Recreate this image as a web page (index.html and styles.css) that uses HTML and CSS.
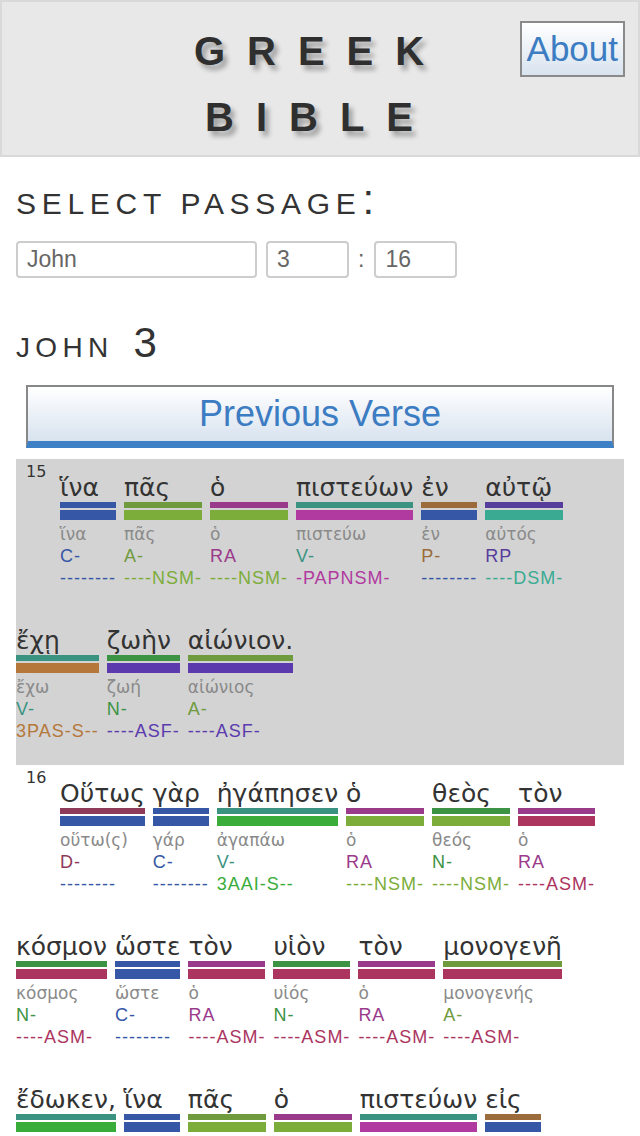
FILE: index.html
```html
<!DOCTYPE html>
<html lang="en">
<head>
<meta charset="utf-8">
<title>Greek Bible</title>
<link rel="stylesheet" href="styles.css">
</head>
<body>
<header class="site-header">
  <h1 class="title"><span class="title-line">GREEK</span><span class="title-line">BIBLE</span></h1>
  <button class="about-btn" type="button">About</button>
</header>
<main class="content">
  <h2 class="select-title">SELECT PASSAGE<span class="colon">:</span></h2>
  <form class="passage-form">
    <input class="field field-book" type="text" value="John">
    <input class="field field-num" type="text" value="3">
    <span class="sep">:</span>
    <input class="field field-num" type="text" value="16">
  </form>
  <h2 class="chapter-title">JOHN <span class="chapter-num">3</span></h2>
  <button class="prev-btn" type="button">Previous Verse</button>

  <section class="verse verse-current">
    <span class="vnum">15</span>
    <div class="word pos-C ps-none"><div class="gk">ἵνα</div><div class="bar1"></div><div class="bar2"></div><div class="lemma">ἵνα</div><div class="pos">C-</div><div class="parse">--------</div></div>
    <div class="word pos-A ps-NSM"><div class="gk">πᾶς</div><div class="bar1"></div><div class="bar2"></div><div class="lemma">πᾶς</div><div class="pos">A-</div><div class="parse">----NSM-</div></div>
    <div class="word pos-RA ps-NSM"><div class="gk">ὁ</div><div class="bar1"></div><div class="bar2"></div><div class="lemma">ὁ</div><div class="pos">RA</div><div class="parse">----NSM-</div></div>
    <div class="word pos-V ps-PAPNSM"><div class="gk">πιστεύων</div><div class="bar1"></div><div class="bar2"></div><div class="lemma">πιστεύω</div><div class="pos">V-</div><div class="parse">-PAPNSM-</div></div>
    <div class="word pos-P ps-none"><div class="gk">ἐν</div><div class="bar1"></div><div class="bar2"></div><div class="lemma">ἐν</div><div class="pos">P-</div><div class="parse">--------</div></div>
    <div class="word pos-RP ps-DSM"><div class="gk">αὐτῷ</div><div class="bar1"></div><div class="bar2"></div><div class="lemma">αὐτός</div><div class="pos">RP</div><div class="parse">----DSM-</div></div>
    <div class="word pos-V ps-3PAS"><div class="gk">ἔχῃ</div><div class="bar1"></div><div class="bar2"></div><div class="lemma">ἔχω</div><div class="pos">V-</div><div class="parse">3PAS-S--</div></div>
    <div class="word pos-N ps-ASF"><div class="gk">ζωὴν</div><div class="bar1"></div><div class="bar2"></div><div class="lemma">ζωή</div><div class="pos">N-</div><div class="parse">----ASF-</div></div>
    <div class="word pos-A ps-ASF"><div class="gk">αἰώνιον.</div><div class="bar1"></div><div class="bar2"></div><div class="lemma">αἰώνιος</div><div class="pos">A-</div><div class="parse">----ASF-</div></div>
  </section>

  <section class="verse">
    <span class="vnum">16</span>
    <div class="word pos-D ps-none"><div class="gk">Οὕτως</div><div class="bar1"></div><div class="bar2"></div><div class="lemma">οὕτω(ς)</div><div class="pos">D-</div><div class="parse">--------</div></div>
    <div class="word pos-C ps-none"><div class="gk">γὰρ</div><div class="bar1"></div><div class="bar2"></div><div class="lemma">γάρ</div><div class="pos">C-</div><div class="parse">--------</div></div>
    <div class="word pos-V ps-3AAI"><div class="gk">ἠγάπησεν</div><div class="bar1"></div><div class="bar2"></div><div class="lemma">ἀγαπάω</div><div class="pos">V-</div><div class="parse">3AAI-S--</div></div>
    <div class="word pos-RA ps-NSM"><div class="gk">ὁ</div><div class="bar1"></div><div class="bar2"></div><div class="lemma">ὁ</div><div class="pos">RA</div><div class="parse">----NSM-</div></div>
    <div class="word pos-N ps-NSM"><div class="gk">θεὸς</div><div class="bar1"></div><div class="bar2"></div><div class="lemma">θεός</div><div class="pos">N-</div><div class="parse">----NSM-</div></div>
    <div class="word pos-RA ps-ASM"><div class="gk">τὸν</div><div class="bar1"></div><div class="bar2"></div><div class="lemma">ὁ</div><div class="pos">RA</div><div class="parse">----ASM-</div></div>
    <div class="word pos-N ps-ASM"><div class="gk">κόσμον</div><div class="bar1"></div><div class="bar2"></div><div class="lemma">κόσμος</div><div class="pos">N-</div><div class="parse">----ASM-</div></div>
    <div class="word pos-C ps-none"><div class="gk">ὥστε</div><div class="bar1"></div><div class="bar2"></div><div class="lemma">ὥστε</div><div class="pos">C-</div><div class="parse">--------</div></div>
    <div class="word pos-RA ps-ASM"><div class="gk">τὸν</div><div class="bar1"></div><div class="bar2"></div><div class="lemma">ὁ</div><div class="pos">RA</div><div class="parse">----ASM-</div></div>
    <div class="word pos-N ps-ASM"><div class="gk">υἱὸν</div><div class="bar1"></div><div class="bar2"></div><div class="lemma">υἱός</div><div class="pos">N-</div><div class="parse">----ASM-</div></div>
    <div class="word pos-RA ps-ASM"><div class="gk">τὸν</div><div class="bar1"></div><div class="bar2"></div><div class="lemma">ὁ</div><div class="pos">RA</div><div class="parse">----ASM-</div></div>
    <div class="word pos-A ps-ASM"><div class="gk">μονογενῆ</div><div class="bar1"></div><div class="bar2"></div><div class="lemma">μονογενής</div><div class="pos">A-</div><div class="parse">----ASM-</div></div>
    <div class="word pos-V ps-3AAI"><div class="gk">ἔδωκεν,</div><div class="bar1"></div><div class="bar2"></div><div class="lemma">δίδωμι</div><div class="pos">V-</div><div class="parse">3AAI-S--</div></div>
    <div class="word pos-C ps-none"><div class="gk">ἵνα</div><div class="bar1"></div><div class="bar2"></div><div class="lemma">ἵνα</div><div class="pos">C-</div><div class="parse">--------</div></div>
    <div class="word pos-A ps-NSM"><div class="gk">πᾶς</div><div class="bar1"></div><div class="bar2"></div><div class="lemma">πᾶς</div><div class="pos">A-</div><div class="parse">----NSM-</div></div>
    <div class="word pos-RA ps-NSM"><div class="gk">ὁ</div><div class="bar1"></div><div class="bar2"></div><div class="lemma">ὁ</div><div class="pos">RA</div><div class="parse">----NSM-</div></div>
    <div class="word pos-V ps-PAPNSM"><div class="gk">πιστεύων</div><div class="bar1"></div><div class="bar2"></div><div class="lemma">πιστεύω</div><div class="pos">V-</div><div class="parse">-PAPNSM-</div></div>
    <div class="word pos-P ps-none"><div class="gk">εἰς</div><div class="bar1"></div><div class="bar2"></div><div class="lemma">εἰς</div><div class="pos">P-</div><div class="parse">--------</div></div>
    <div class="word pos-RP ps-ASM"><div class="gk">αὐτὸν</div><div class="bar1"></div><div class="bar2"></div><div class="lemma">αὐτός</div><div class="pos">RP</div><div class="parse">----ASM-</div></div>
    <div class="word pos-D ps-none"><div class="gk">μὴ</div><div class="bar1"></div><div class="bar2"></div><div class="lemma">μή</div><div class="pos">D-</div><div class="parse">--------</div></div>
    <div class="word pos-V ps-3AMS"><div class="gk">ἀπόληται</div><div class="bar1"></div><div class="bar2"></div><div class="lemma">ἀπόλλυμι</div><div class="pos">V-</div><div class="parse">3AMS-S--</div></div>
    <div class="word pos-C ps-none"><div class="gk">ἀλλ’</div><div class="bar1"></div><div class="bar2"></div><div class="lemma">ἀλλά</div><div class="pos">C-</div><div class="parse">--------</div></div>
    <div class="word pos-V ps-3PAS"><div class="gk">ἔχῃ</div><div class="bar1"></div><div class="bar2"></div><div class="lemma">ἔχω</div><div class="pos">V-</div><div class="parse">3PAS-S--</div></div>
    <div class="word pos-N ps-ASF"><div class="gk">ζωὴν</div><div class="bar1"></div><div class="bar2"></div><div class="lemma">ζωή</div><div class="pos">N-</div><div class="parse">----ASF-</div></div>
    <div class="word pos-A ps-ASF"><div class="gk">αἰώνιον.</div><div class="bar1"></div><div class="bar2"></div><div class="lemma">αἰώνιος</div><div class="pos">A-</div><div class="parse">----ASF-</div></div>
  </section>
</main>
</body>
</html>
```

FILE: styles.css
```css
html, body {
  margin: 0;
  padding: 0;
  background: #ffffff;
  font-family: "Liberation Sans", Arial, sans-serif;
  color: #333333;
}

/* ---------- header ---------- */
.site-header {
  display: grid;
  grid-template-columns: 1fr auto 1fr;
  align-items: start;
  background: #e8e8e8;
  border: 2px solid #d9d9d9;
  padding: 16px 13px 5px;
}

.title {
  grid-column: 2;
  margin: 0;
  font-family: "Liberation Sans", Arial, sans-serif;
  font-weight: bold;
  font-size: 40px;
  line-height: 66px;
  letter-spacing: 22px;
  color: #2f2f2f;
  text-align: center;
  text-shadow: 4px 5px 5px rgba(0, 0, 0, 0.32);
}

.title-line {
  display: block;
}

.about-btn {
  grid-column: 3;
  justify-self: end;
  margin-top: 3px;
  padding: 6px 5px;
  border: 2px solid #8a8a8a;
  border-radius: 0;
  background: linear-gradient(#ffffff, #d8e3ef);
  font-family: "Liberation Sans", Arial, sans-serif;
  font-size: 35px;
  line-height: 40px;
  color: #3b7cc2;
}

/* ---------- content ---------- */
.content {
  padding: 0 16px;
}

.select-title {
  margin: 30px 0 0;
  font-weight: normal;
  font-size: 30px;
  line-height: 34px;
  letter-spacing: 5.7px;
  color: #333333;
}

.colon {
  margin-left: 1px;
  font-size: 42px;
  line-height: 0;
  letter-spacing: 0;
}

.passage-form {
  display: flex;
  align-items: center;
  gap: 9px;
  margin-top: 20px;
}

.field {
  box-sizing: border-box;
  height: 37px;
  margin: 0;
  padding: 0 9px;
  border: 2px solid #cdcdcd;
  border-radius: 4px;
  background: #ffffff;
  font-family: "Liberation Sans", Arial, sans-serif;
  font-size: 23px;
  color: #666666;
}

.field-book {
  width: 241px;
}

.field-num {
  width: 83px;
}

.sep {
  margin-right: 1px;
  font-size: 23px;
  color: #666666;
}

.chapter-title {
  margin: 41px 0 0;
  font-weight: normal;
  font-size: 28px;
  line-height: 48px;
  letter-spacing: 5.3px;
  color: #333333;
}

.chapter-num {
  margin-left: 7px;
  font-size: 42px;
  letter-spacing: 0;
}

.prev-btn {
  display: block;
  box-sizing: border-box;
  width: calc(100% - 20px);
  height: 63px;
  margin: 13px 10px 11px;
  padding: 0;
  border: 2px solid #888888;
  border-bottom: 7px solid #3e80c5;
  border-radius: 0;
  background: linear-gradient(#ffffff, #d8e3ef);
  font-family: "Liberation Sans", Arial, sans-serif;
  font-size: 36px;
  line-height: 40px;
  color: #3b7cc2;
}

/* ---------- verses ---------- */
.verse {
  display: flex;
  flex-wrap: wrap;
  align-items: flex-start;
  column-gap: 8px;
  padding-right: 6px;
}

.verse-current {
  background: #d3d3d3;
}

.vnum {
  box-sizing: border-box;
  width: 36px;
  padding: 4px 0 0 10px;
  font-family: "DejaVu Sans", Verdana, sans-serif;
  font-size: 16px;
  line-height: 18px;
  color: #333333;
}

.word {
  white-space: nowrap;
}

.gk {
  padding-top: 15px;
  font-family: "DejaVu Sans", Verdana, sans-serif;
  font-size: 25px;
  line-height: 28px;
  color: #333333;
}

.bar1 {
  height: 6px;
  margin-bottom: 2px;
  background: var(--pc);
}

.bar2 {
  height: 10px;
  background: var(--xc);
}

.lemma {
  margin-top: 3px;
  font-family: "DejaVu Sans", Verdana, sans-serif;
  font-size: 17px;
  line-height: 22px;
  color: #8a8a8a;
}

.pos,
.parse {
  font-family: "Liberation Sans", Arial, sans-serif;
  font-size: 18px;
  letter-spacing: 1px;
}

.pos {
  line-height: 22px;
  color: var(--pc);
}

.parse {
  line-height: 23px;
  margin-bottom: 22px;
  color: var(--xc);
}

/* part of speech colours (top bar + code) */
.pos-C  { --pc: #3656a6; }
.pos-A  { --pc: #6f9a3e; }
.pos-RA { --pc: #9a3a8b; }
.pos-V  { --pc: #3a9380; }
.pos-N  { --pc: #3c9343; }
.pos-D  { --pc: #8f3a58; }
.pos-P  { --pc: #9b6b3b; }
.pos-RP { --pc: #573d9b; }

/* parsing colours (bottom bar + code) */
.ps-none   { --xc: #3656a6; }
.ps-NSM    { --xc: #7cad3a; }
.ps-ASM    { --xc: #ab355f; }
.ps-ASF    { --xc: #5a3aad; }
.ps-DSM    { --xc: #3aab92; }
.ps-PAPNSM { --xc: #b03a9f; }
.ps-3PAS   { --xc: #b5783a; }
.ps-3AAI   { --xc: #3aac3a; }
.ps-3AMS   { --xc: #3a8fab; }
```
